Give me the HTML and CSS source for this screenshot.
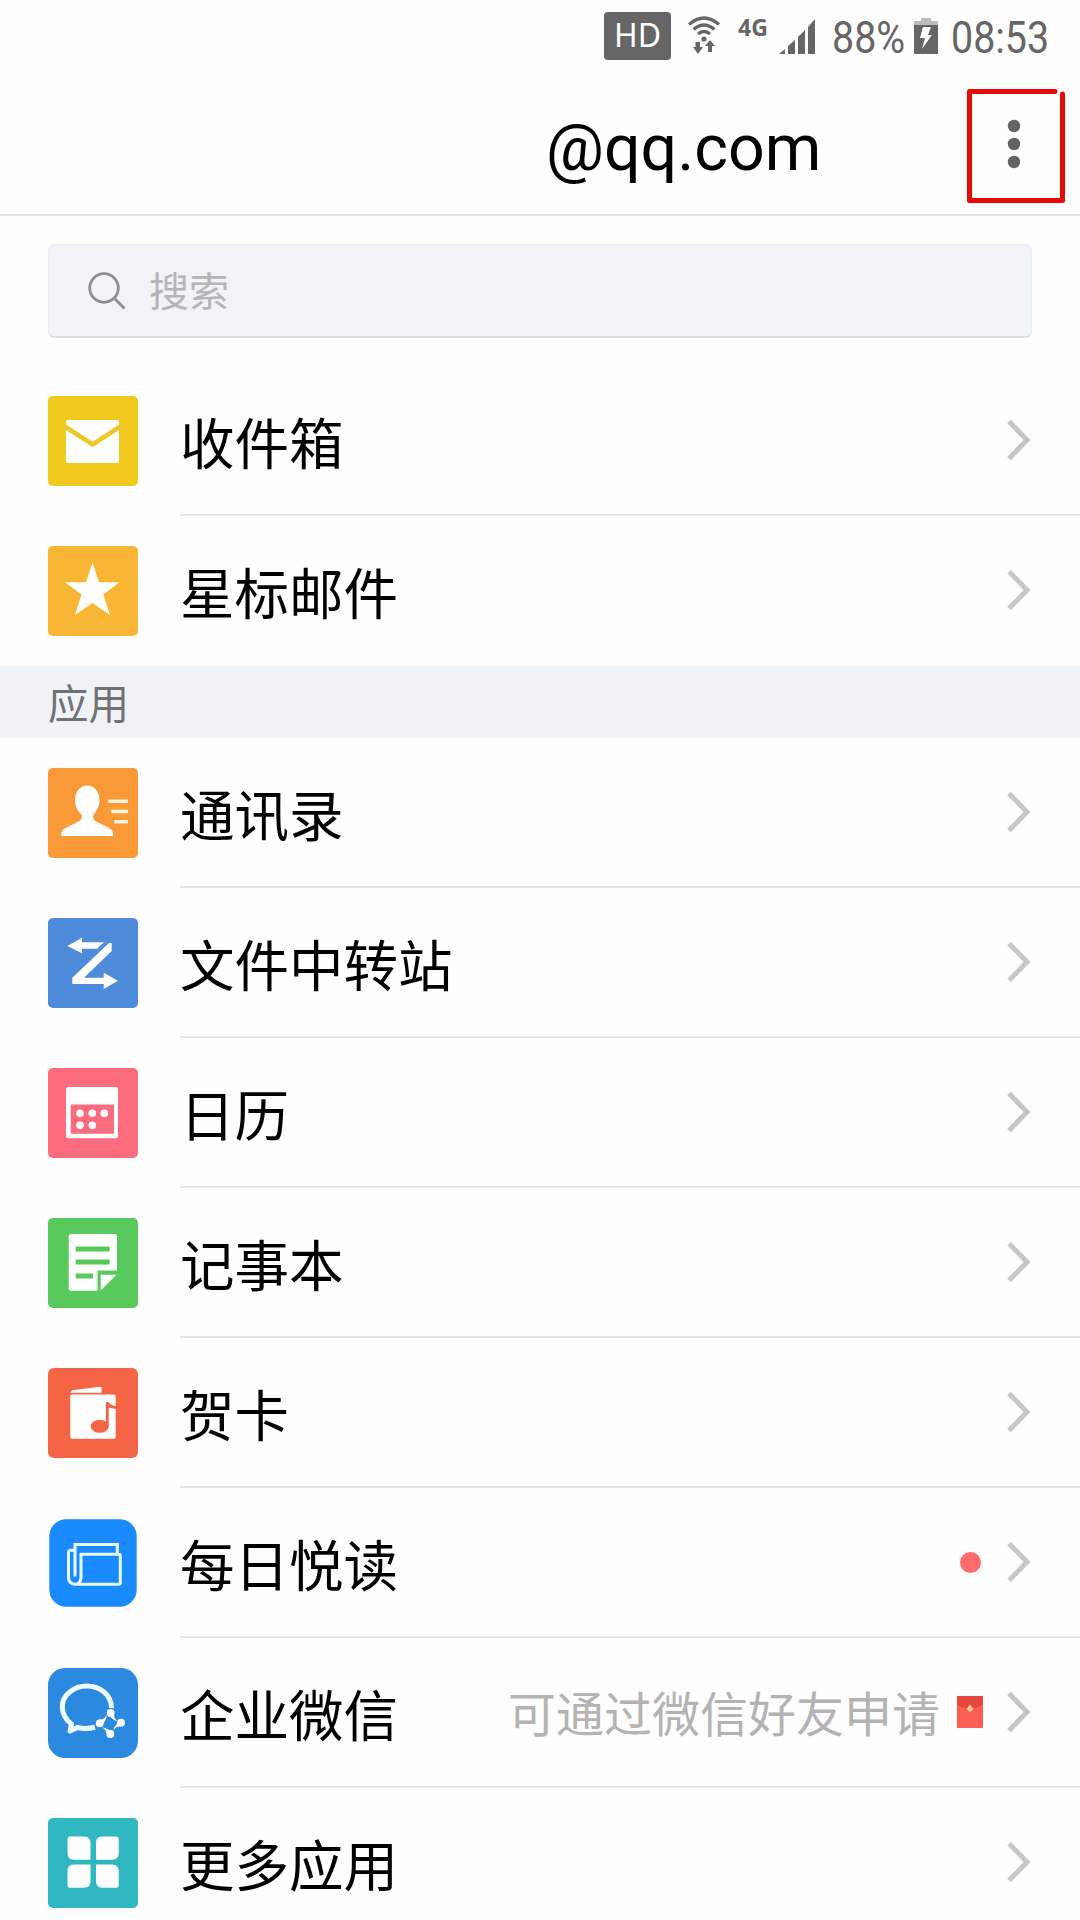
FILE: index.html
```html
<!DOCTYPE html>
<html lang="zh-CN">
<head>
<meta charset="utf-8">
<title>@qq.com</title>
<link rel="stylesheet" href="styles.css">
</head>
<body>
<svg class="defs" width="0" height="0" aria-hidden="true">
  <symbol id="chevron" viewBox="0 0 24 42"><path d="M2 2.500 20 21 2 39.500" fill="none" stroke="#c7c7c7" stroke-width="5"/></symbol>
</svg>
<div class="screen">
  <div class="status">
    <span class="hd">HD</span>
    <svg class="wifi" width="34" height="40" viewBox="0 0 34 40" fill="none" stroke="#666" stroke-width="3.200">
      <path d="M2 8.500Q17-4.500 32 8.500M6.500 13.500Q17 4.500 27.500 13.500M11 18Q17 13 23 18"/>
      <circle cx="17" cy="23" r="2.600" fill="#666" stroke="none"/>
      <path d="M8.500 26h4.500v5h3l-5 7-5-7h2.500zM21 36h4v-6h3l-5-6-5 6h3z" fill="#666" stroke="none"/>
    </svg>
    <span class="net">4G</span>
    <svg class="bars" width="37" height="38" viewBox="0 0 37 38" fill="#666">
      <path d="M0 36 6 31V36zM9 28 16 22V36H9zM19 19 26 12V36H19zM29 9 36 1V36H29z"/>
    </svg>
    <span class="battery-text"><span class="narrow">88%</span></span>
    <svg class="battery" width="24" height="36" viewBox="0 0 24 36">
      <path d="M0 7V3H7V0H17V3H24V7z" fill="#bcbcbc"/>
      <path d="M0 7H24V36H0z" fill="#666"/>
      <path d="M9 9H17L14 17H18L8 31 11 20H6z" fill="#fff"/>
    </svg>
    <span class="clock"><span class="narrow">08:53</span></span>
  </div>
  <header class="header">
    <h1 class="title">@qq.com</h1>
    <svg class="more" width="14" height="50" viewBox="0 0 14 50" fill="#636363"><circle cx="7" cy="7" r="6.200"/><circle cx="7" cy="25" r="6.200"/><circle cx="7" cy="43" r="6.200"/></svg>
    <svg class="highlight" width="100" height="116" viewBox="0 0 100 116" fill="none" stroke="#e80b05" stroke-width="5" stroke-linecap="round" stroke-linejoin="round">
      <path d="M89 3.500H3.500V112.500H96.500V6"/>
    </svg>
  </header>
  <div class="search">
    <svg width="40" height="40" viewBox="0 0 40 40" fill="none" stroke="#8d8d92" stroke-width="2.800"><circle cx="17" cy="17" r="14.300"/><path d="M27 27 37.500 37.500"/></svg>
    <span class="placeholder">搜索</span>
  </div>
  <main>
    <div class="row">
      <svg class="icon" viewBox="0 0 90 90"><rect width="90" height="90" rx="5" fill="#f0cb1e"/><rect x="18" y="24" width="53" height="43" rx="2" fill="#fff"/><path d="M16 30 44.700 48.500 73 30" fill="none" stroke="#ecc82a" stroke-width="4.600"/></svg>
      <div class="body"><span class="label">收件箱</span><svg class="chev"><use href="#chevron"/></svg></div>
    </div>
    <div class="row last">
      <svg class="icon" viewBox="0 0 90 90"><rect width="90" height="90" rx="5" fill="#f9b634"/><path d="M44.500 16.500 51 36.300H71.500L55.300 48.500 62 69 44.500 57 27 69 33.500 48.500 17 36.300H38z" fill="#fff"/></svg>
      <div class="body"><span class="label">星标邮件</span><svg class="chev"><use href="#chevron"/></svg></div>
    </div>
    <h2 class="section">应用</h2>
    <div class="row">
      <svg class="icon" viewBox="0 0 90 90"><rect width="90" height="90" rx="5" fill="#fa9938"/><path d="M39.300 17.500C46.500 17.500 51.500 24 51.500 32 51.500 39 48.500 43 45.500 46.500 44.500 50 45.500 52 49 54 56 57.500 62 59.500 64 62.500 65 64 65 66 65 68H13.300C13.300 66 13.300 64 14.500 62.500 17 59.500 23 57.500 29.500 54 33.500 52 34.500 50 33.500 46.500 30 43 27 39 27 32 27 24 32 17.500 39.300 17.500z" fill="#fff"/><path d="M60.300 33.300H80M63.300 43.500H80M66.300 53.700H80" stroke="#fff3e0" stroke-width="3.400"/></svg>
      <div class="body"><span class="label">通讯录</span><svg class="chev"><use href="#chevron"/></svg></div>
    </div>
    <div class="row">
      <svg class="icon" viewBox="0 0 90 90"><rect width="90" height="90" rx="5" fill="#4f8bdb"/><path d="M19.300 28 34 19.700V24.300H56L49 30.700H34V35.300zM63.700 25V33L36 59.700H55.700V54.700L70 62.700 55.700 71V66H24.300V59.700L61 25z" fill="#fff"/></svg>
      <div class="body"><span class="label">文件中转站</span><svg class="chev"><use href="#chevron"/></svg></div>
    </div>
    <div class="row">
      <svg class="icon" viewBox="0 0 90 90"><rect width="90" height="90" rx="5" fill="#fd6c7e"/><rect x="18" y="19" width="52" height="51.300" rx="2.500" fill="#fff"/><path d="M22.700 36.500H66V65.700H22.700z" fill="#fd6c7e"/><g fill="#fff"><circle cx="32" cy="45.300" r="3.800"/><circle cx="44.300" cy="45.300" r="3.800"/><circle cx="56.300" cy="45.300" r="3.800"/><circle cx="32" cy="57.300" r="3.800"/><circle cx="44.300" cy="57.300" r="3.800"/></g></svg>
      <div class="body"><span class="label">日历</span><svg class="chev"><use href="#chevron"/></svg></div>
    </div>
    <div class="row">
      <svg class="icon" viewBox="0 0 90 90"><rect width="90" height="90" rx="5" fill="#57ca5b"/><path d="M23 16H67Q69 16 69 18V52.500H49.500V72.700H22.500Q20.700 72.700 20.700 71V18Q20.700 16 23 16zM52.700 56.700H68.500L52.700 72.500z" fill="#fff"/><path d="M27.700 31H61.700M27.700 44H61.700M27.700 58H45" stroke="#57ca5b" stroke-width="5"/></svg>
      <div class="body"><span class="label">记事本</span><svg class="chev"><use href="#chevron"/></svg></div>
    </div>
    <div class="row">
      <svg class="icon" viewBox="0 0 90 90"><rect width="90" height="90" rx="6" fill="#f56445"/><path d="M22.500 24.700 24 22.300 52 18.700Q53.700 18.700 53.700 20.500V24.700z" fill="#fff"/><rect x="22.300" y="26.500" width="45.400" height="44.200" rx="1.800" fill="#fff"/><ellipse cx="51.700" cy="58.300" rx="9" ry="6.500" fill="#f56445"/><path d="M58 34H60.500Q63 38 68 38V41Q63 40 60.700 39.500V58.500H58z" fill="#f56445"/></svg>
      <div class="body"><span class="label">贺卡</span><svg class="chev"><use href="#chevron"/></svg></div>
    </div>
    <div class="row">
      <svg class="icon" viewBox="0 0 90 90"><rect x="1.300" y="1.300" width="87.400" height="87.400" rx="17" fill="#198aff"/><path d="M33 60V36.200H70.500Q72.300 36.200 72.300 38V64.500Q72.300 66.300 70.500 66.300H27Q20.500 66 20.500 59V35Q20.500 32.300 23 32.300H26M27 58.500V26.500H69.300V36M33 59Q33 65 28.500 66.200" fill="none" stroke="#e8fbff" stroke-width="3"/></svg>
      <div class="body"><span class="label">每日悦读</span><span class="dot"></span><svg class="chev"><use href="#chevron"/></svg></div>
    </div>
    <div class="row">
      <svg class="icon" viewBox="0 0 90 90"><rect width="90" height="90" rx="17" fill="#2b8ae0"/><path d="M63.500 40C63.500 27 52 18 39 18S14.300 27 14.300 38.500C14.300 46 18 52 23.500 56L22 63 29.500 59.500Q38 61.500 47 59.300" fill="none" stroke="#eefcff" stroke-width="5" stroke-linejoin="round"/><g fill="#fff"><circle cx="62.700" cy="45" r="3.900"/><circle cx="73" cy="54.700" r="3.900"/><circle cx="62.300" cy="66" r="3.900"/><circle cx="51.700" cy="55.300" r="3.900"/><path d="M60 42.500 66 47Q66.500 51 70 53.500L66 52Q61 48.500 60 42.500zM75 58 71 58.500Q67 59 65 63.500L66.500 59Q69 54.500 74 52zM65.500 68 59 67Q58.500 62 54 59L58 60.500Q64 62.500 65.500 68zM50 52 53 51.500Q57 51 59 46L58 51Q55.500 57 50 58z"/></g></svg>
      <div class="body"><span class="label">企业微信</span><span class="hint">可通过微信好友申请</span><svg class="packet" width="26" height="32" viewBox="0 0 26 32"><rect width="26" height="32" rx="1" fill="#fc5e55"/><path d="M0 1Q0 0 1 0H25Q26 0 26 1V9Q13 16 0 9z" fill="#e5463e"/><path d="M13 8.500 16.500 12.700 13 16.500 9.500 12.700z" fill="#ffc78a"/></svg><svg class="chev"><use href="#chevron"/></svg></div>
    </div>
    <div class="row last">
      <svg class="icon" viewBox="0 0 90 90"><rect width="90" height="90" rx="5" fill="#31b7bf"/><path d="M22 18.500H36Q42.500 18.500 42.500 25V41.700H26Q19.500 41.700 19.500 35V21Q19.500 18.500 22 18.500zM54 18.500H68.500Q70.700 18.500 70.700 21V35Q70.700 41.700 64 41.700H48V25Q48 18.500 54 18.500zM26 46.500H42.500V63Q42.500 69.700 36 69.700H22Q19.500 69.700 19.500 67V53Q19.500 46.500 26 46.500zM48 46.500H64Q70.700 46.500 70.700 53V67Q70.700 69.700 68.500 69.700H54Q48 69.700 48 63z" fill="#fff"/></svg>
      <div class="body"><span class="label">更多应用</span><svg class="chev"><use href="#chevron"/></svg></div>
    </div>
  </main>
</div>
</body>
</html>
```
FILE: styles.css
```css
* {
  box-sizing: border-box;
}

body {
  margin: 0;
  background: #fefefe;
  color: #000;
  font-family: Roboto, "Noto Sans CJK SC", sans-serif;
}

.defs {
  display: block;
}

.screen {
  width: 1080px;
  height: 1920px;
  overflow: hidden;
}

svg {
  display: block;
  flex: none;
}

.status {
  display: flex;
  align-items: flex-start;
  height: 72px;
  padding: 12px 0 0 604px;
  color: #666;
}

.hd {
  width: 67px;
  height: 48px;
  border-radius: 4px;
  background: #666;
  color: #fff;
  font: 32px/46px "Noto Sans", sans-serif;
  text-align: center;
}

.wifi {
  margin: 4px 0 0 16px;
}

.net {
  width: 42px;
  margin: 1px 0 0 17px;
  font: bold 23px/28px "Noto Sans", sans-serif;
}

.bars {
  margin-top: 6px;
  margin-left: -1px;
}

.narrow {
  display: inline-block;
  font-size: 45px;
  line-height: 52px;
  transform-origin: left top;
  transform: scaleX(0.875);
}

.battery-text {
  width: 81px;
  margin-left: 16px;
}

.battery {
  margin: 6px 0 0 1px;
}

.clock {
  width: 110px;
  margin-left: 13px;
}

.header {
  position: relative;
  display: flex;
  align-items: center;
  height: 144px;
  padding: 2px 59px 0 546px;
  border-bottom: 2px solid #e4e5e6;
}

.title {
  flex: 1;
  margin: 8px 0 0;
  font-size: 64.5px;
  font-weight: 400;
  line-height: 80px;
}

.highlight {
  position: absolute;
  top: 16px;
  left: 966px;
}

.search {
  display: flex;
  align-items: center;
  gap: 22px;
  height: 94px;
  margin: 28px 48px;
  padding-left: 38px;
  border: 1px solid #eceef1;
  border-bottom: 2px solid #dcdfe2;
  border-radius: 6px;
  background: #f0f3f7;
  color: #b5b5b9;
  font-size: 40px;
  line-height: 60px;
}

.placeholder {
  padding-top: 5px;
}

.row {
  display: flex;
  align-items: center;
  height: 150px;
  padding-left: 48px;
}

.icon {
  width: 90px;
  height: 90px;
}

.body {
  display: flex;
  flex: 1;
  align-items: center;
  height: 150px;
  margin-left: 42px;
  padding-right: 49px;
  border-bottom: 2px solid #e5e5e5;
}

.last .body {
  border-bottom-color: transparent;
}

.label {
  flex: 1;
  padding-top: 10px;
  font-size: 54.5px;
  line-height: 80px;
}

.chev {
  width: 24px;
  height: 42px;
  margin-left: 24px;
}

.dot {
  width: 21px;
  height: 21px;
  margin-right: 2px;
  border-radius: 50%;
  background: #fe6b6c;
}

.hint {
  margin-right: 17px;
  padding-top: 8px;
  color: #b3b3b3;
  font-size: 48px;
  line-height: 70px;
}

.section {
  height: 72px;
  margin: 0;
  padding: 2px 0 0 48px;
  background: #eff3f7;
  color: #717175;
  font-size: 40.5px;
  font-weight: 400;
  line-height: 75px;
}
```
